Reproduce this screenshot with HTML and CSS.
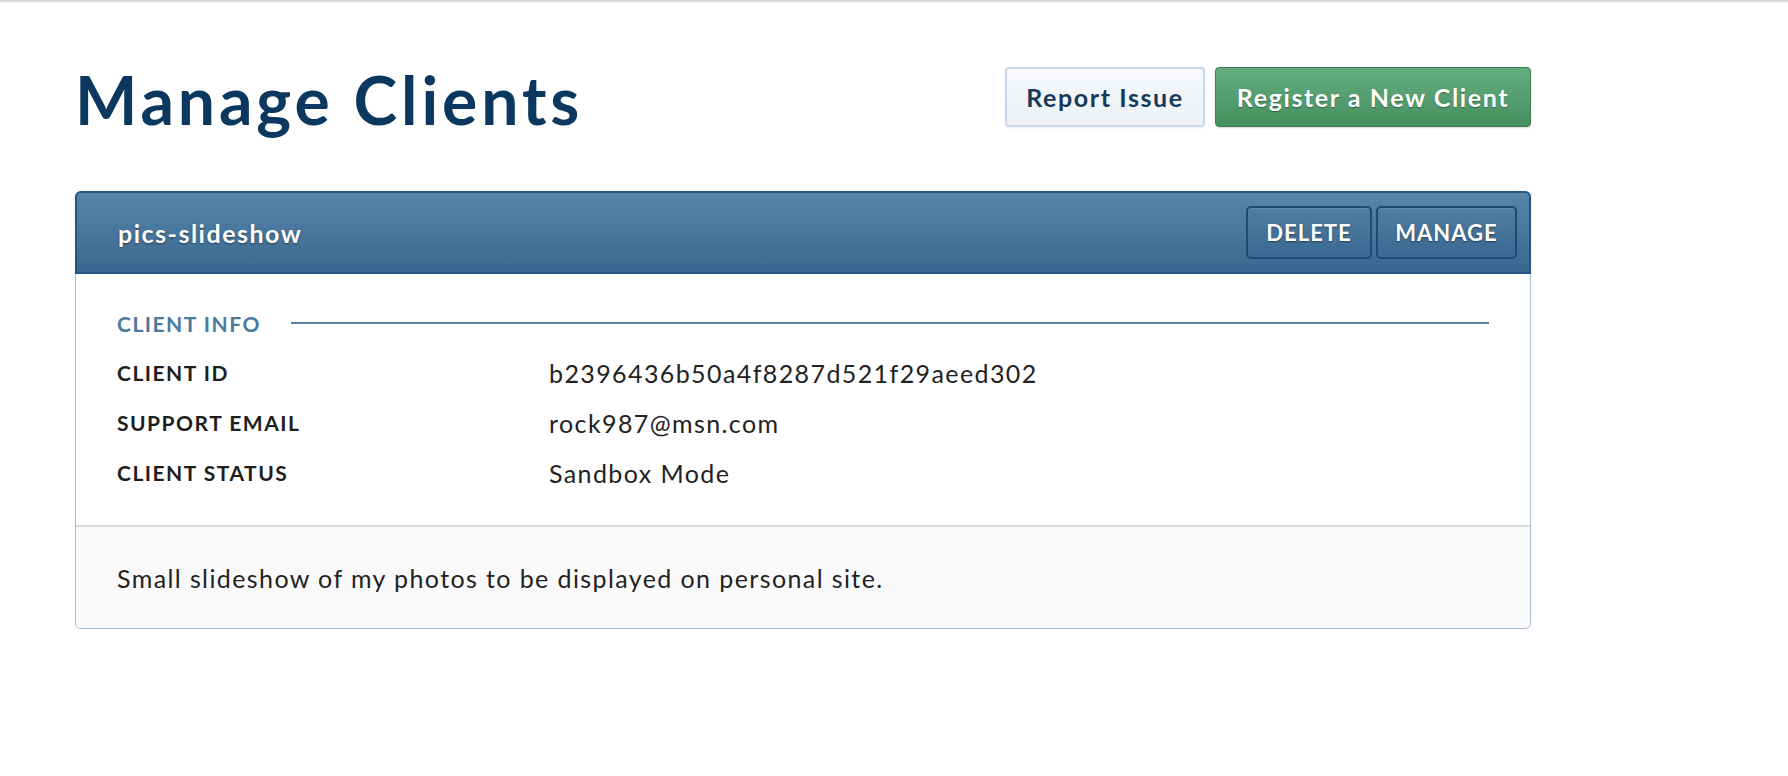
FILE: index.html
```html
<!DOCTYPE html>
<html>
<head>
<meta charset="utf-8">
<link rel="stylesheet" href="styles.css">
</head>
<body>
<div class="topbar"></div>
<main class="page">
  <header class="page-head">
    <h1 class="title">Manage Clients</h1>
    <div class="actions">
      <button class="btn btn-light">Report Issue</button>
      <button class="btn btn-green">Register a New Client</button>
    </div>
  </header>

  <section class="card">
    <div class="card-head">
      <h2 class="card-name">pics-slideshow</h2>
      <div class="card-actions">
        <button class="hbtn">DELETE</button>
        <button class="hbtn">MANAGE</button>
      </div>
    </div>
    <div class="card-body">
      <div class="section-title"><span>CLIENT INFO</span><span class="rule"></span></div>
      <dl class="info">
        <dt>CLIENT ID</dt><dd>b2396436b50a4f8287d521f29aeed302</dd>
        <dt>SUPPORT EMAIL</dt><dd>rock987@msn.com</dd>
        <dt>CLIENT STATUS</dt><dd>Sandbox Mode</dd>
      </dl>
    </div>
    <div class="card-foot">Small slideshow of my photos to be displayed on personal site.</div>
  </section>
</main>
</body>
</html>
```

FILE: styles.css
```css
* { box-sizing: border-box; }
html, body { margin: 0; padding: 0; background: #fff; }
body { font-family: "Lato", "Open Sans", sans-serif; color: #222; }

.topbar {
  height: 3px;
  background: linear-gradient(#cfcfcf, #f2f2f2);
}

.page {
  width: 1456px;
  margin-left: 75px;
}

.page-head {
  display: flex;
  justify-content: space-between;
  align-items: flex-start;
  padding-top: 64px;
  height: 188px;
}

.title {
  margin: 0;
  font-size: 66px;
  line-height: 66px;
  font-weight: 700;
  color: #0c3860;
  letter-spacing: 3.9px;
}

.actions {
  display: flex;
  gap: 10px;
}

.btn {
  height: 60px;
  border-radius: 4px;
  font-family: inherit;
  font-weight: 700;
  font-size: 25px;
  letter-spacing: 1.6px;
  padding: 0;
  cursor: pointer;
}
.btn-light {
  width: 200px;
  background: linear-gradient(#f7f9fb, #edf1f5);
  border: 2px solid #c7d9ea;
  color: #163a5c;
  box-shadow: 0 1px 2px rgba(0,0,0,0.08);
}
.btn-green {
  width: 316px;
  background: linear-gradient(#63ad80, #46905f);
  border: 1px solid #3c7f53;
  color: #fff;
  text-shadow: 0 1px 1px rgba(0,0,0,0.35);
  box-shadow: 0 1px 2px rgba(0,0,0,0.15);
}

.card {
  border: 1px solid #a7bdd2;
  border-radius: 6px;
  box-shadow: 0 1px 2px rgba(0,0,0,0.08);
}

.card-head {
  height: 83px;
  display: flex;
  align-items: center;
  justify-content: space-between;
  padding: 0 12px 0 41px;
  margin: -1px -1px 0 -1px;
  border: 2px solid #235683;
  border-radius: 6px 6px 0 0;
  background: linear-gradient(#5785a9, #3a678f);
}

.card-name {
  margin: 0;
  font-size: 25px;
  font-weight: 700;
  letter-spacing: 1.5px;
  color: #fff;
  text-shadow: 0 1px 2px rgba(0,0,0,0.45);
}

.card-actions {
  display: flex;
  gap: 4px;
}

.hbtn {
  height: 53px;
  padding: 0;
  border: 2px solid #1c4a73;
  border-radius: 5px;
  background: linear-gradient(#4f7ea3, #3b6891);
  color: #fff;
  font-family: inherit;
  font-weight: 700;
  font-size: 22px;
  letter-spacing: 1px;
  text-shadow: 0 1px 2px rgba(0,0,0,0.45);
  box-shadow: inset 0 1px 0 rgba(255,255,255,0.12);
}
.hbtn:first-child { width: 126px; }
.hbtn:last-child { width: 141px; }

.card-body {
  padding: 33px 41px 27px 41px;
  border-bottom: 2px solid #d9d9d9;
}

.section-title {
  display: flex;
  align-items: center;
  gap: 30px;
  height: 32px;
  font-size: 21px;
  font-weight: 700;
  letter-spacing: 1.5px;
  color: #4b7aa1;
}
.section-title .rule {
  flex: 1;
  height: 2px;
  background: #5683a8;
}

.info {
  display: grid;
  grid-template-columns: 432px 1fr;
  margin: 9px 0 0 0;
}
.info dt, .info dd {
  margin: 0;
  height: 50px;
  line-height: 50px;
}
.info dt {
  font-size: 21px;
  font-weight: 700;
  letter-spacing: 1.5px;
  color: #1e1e1e;
}
.info dd {
  font-size: 25px;
  letter-spacing: 1.4px;
  color: #222;
}

.card-foot {
  background: #fafafa;
  height: 101px;
  display: flex;
  align-items: center;
  padding: 0 41px;
  font-size: 25px;
  letter-spacing: 1.4px;
  color: #222;
  border-radius: 0 0 6px 6px;
}
```
